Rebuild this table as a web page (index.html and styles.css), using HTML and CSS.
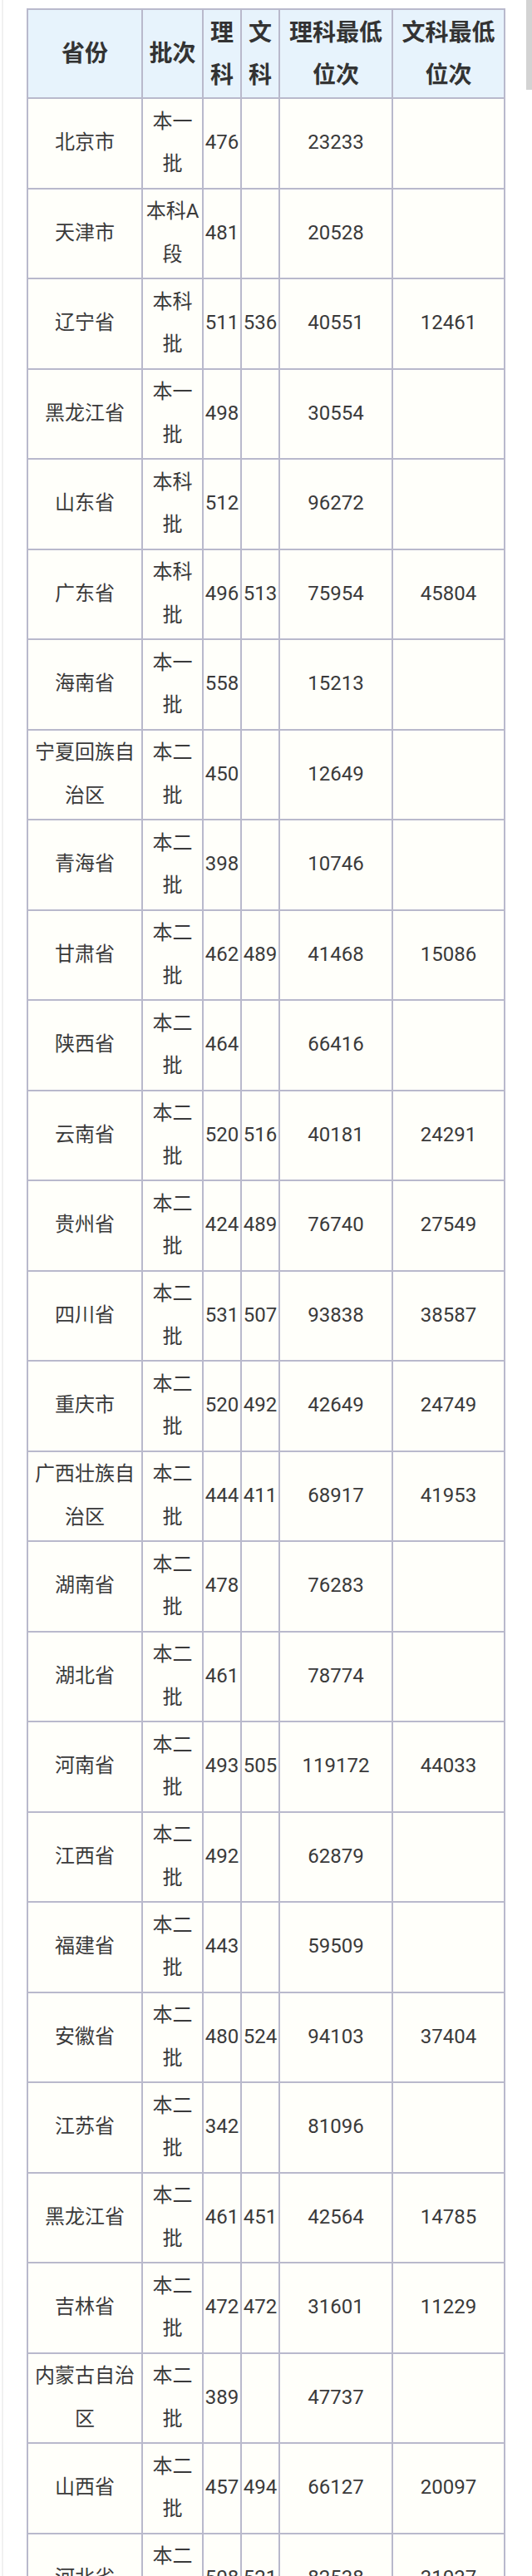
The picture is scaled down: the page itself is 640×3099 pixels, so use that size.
FILE: index.html
```html
<!DOCTYPE html>
<html lang="zh-CN">
<head>
<meta charset="utf-8">
<title>各省录取分数线</title>
<link rel="stylesheet" href="styles.css">
</head>
<body>
<div class="page">
  <div class="scroll-thumb"></div>
  <table class="score-table">
    <colgroup>
      <col class="c-prov"><col class="c-batch"><col class="c-num"><col class="c-num"><col class="c-rank"><col class="c-rank2">
    </colgroup>
    <thead>
      <tr><th>省份</th><th>批次</th><th>理<br>科</th><th>文<br>科</th><th>理科最低<br>位次</th><th>文科最低<br>位次</th></tr>
    </thead>
    <tbody>
      <tr><td>北京市</td><td>本一<br>批</td><td>476</td><td></td><td>23233</td><td></td></tr>
      <tr><td>天津市</td><td>本科A<br>段</td><td>481</td><td></td><td>20528</td><td></td></tr>
      <tr><td>辽宁省</td><td>本科<br>批</td><td>511</td><td>536</td><td>40551</td><td>12461</td></tr>
      <tr><td>黑龙江省</td><td>本一<br>批</td><td>498</td><td></td><td>30554</td><td></td></tr>
      <tr><td>山东省</td><td>本科<br>批</td><td>512</td><td></td><td>96272</td><td></td></tr>
      <tr><td>广东省</td><td>本科<br>批</td><td>496</td><td>513</td><td>75954</td><td>45804</td></tr>
      <tr><td>海南省</td><td>本一<br>批</td><td>558</td><td></td><td>15213</td><td></td></tr>
      <tr><td>宁夏回族自<br>治区</td><td>本二<br>批</td><td>450</td><td></td><td>12649</td><td></td></tr>
      <tr><td>青海省</td><td>本二<br>批</td><td>398</td><td></td><td>10746</td><td></td></tr>
      <tr><td>甘肃省</td><td>本二<br>批</td><td>462</td><td>489</td><td>41468</td><td>15086</td></tr>
      <tr><td>陕西省</td><td>本二<br>批</td><td>464</td><td></td><td>66416</td><td></td></tr>
      <tr><td>云南省</td><td>本二<br>批</td><td>520</td><td>516</td><td>40181</td><td>24291</td></tr>
      <tr><td>贵州省</td><td>本二<br>批</td><td>424</td><td>489</td><td>76740</td><td>27549</td></tr>
      <tr><td>四川省</td><td>本二<br>批</td><td>531</td><td>507</td><td>93838</td><td>38587</td></tr>
      <tr><td>重庆市</td><td>本二<br>批</td><td>520</td><td>492</td><td>42649</td><td>24749</td></tr>
      <tr><td>广西壮族自<br>治区</td><td>本二<br>批</td><td>444</td><td>411</td><td>68917</td><td>41953</td></tr>
      <tr><td>湖南省</td><td>本二<br>批</td><td>478</td><td></td><td>76283</td><td></td></tr>
      <tr><td>湖北省</td><td>本二<br>批</td><td>461</td><td></td><td>78774</td><td></td></tr>
      <tr><td>河南省</td><td>本二<br>批</td><td>493</td><td>505</td><td>119172</td><td>44033</td></tr>
      <tr><td>江西省</td><td>本二<br>批</td><td>492</td><td></td><td>62879</td><td></td></tr>
      <tr><td>福建省</td><td>本二<br>批</td><td>443</td><td></td><td>59509</td><td></td></tr>
      <tr><td>安徽省</td><td>本二<br>批</td><td>480</td><td>524</td><td>94103</td><td>37404</td></tr>
      <tr><td>江苏省</td><td>本二<br>批</td><td>342</td><td></td><td>81096</td><td></td></tr>
      <tr><td>黑龙江省</td><td>本二<br>批</td><td>461</td><td>451</td><td>42564</td><td>14785</td></tr>
      <tr><td>吉林省</td><td>本二<br>批</td><td>472</td><td>472</td><td>31601</td><td>11229</td></tr>
      <tr><td>内蒙古自治<br>区</td><td>本二<br>批</td><td>389</td><td></td><td>47737</td><td></td></tr>
      <tr><td>山西省</td><td>本二<br>批</td><td>457</td><td>494</td><td>66127</td><td>20097</td></tr>
      <tr><td>河北省</td><td>本二<br>批</td><td>508</td><td>521</td><td>82538</td><td>31037</td></tr>
    </tbody>
  </table>
</div>
</body>
</html>
```
FILE: styles.css
```css
html, body {
  margin: 0;
  padding: 0;
  background: #ffffff;
}

body {
  font-family: Roboto, "Noto Sans CJK SC", "Noto Sans", sans-serif;
  color: #3a3a3a;
}

.page {
  position: relative;
  padding: 10px 0 40px 32px;
  min-height: 3099px;
  box-sizing: border-box;
}

.page::before {
  content: "";
  position: absolute;
  left: 2px;
  top: 0;
  bottom: 0;
  width: 2px;
  background: #f1f1f1;
}

.scroll-thumb {
  position: absolute;
  right: 0;
  top: 0;
  width: 7px;
  height: 108px;
  background: #d3d3d3;
}

.score-table {
  border-collapse: collapse;
  table-layout: fixed;
  width: 576px;
}

.c-prov { width: 138px; }
.c-batch { width: 73px; }
.c-num { width: 46px; }
.c-rank { width: 136px; }
.c-rank2 { width: 135px; }

.score-table th,
.score-table td {
  border: 2px solid #b9b9cc;
  text-align: center;
  vertical-align: middle;
  padding: 1.5px 0;
  white-space: nowrap;
}

.score-table th {
  background: #e7f3fc;
  font-weight: 700;
  font-size: 28px;
  line-height: 51px;
  color: #333333;
}

.score-table td {
  background: #fffffa;
  font-size: 24px;
  line-height: 51.75px;
  height: 103.5px;
}
```
